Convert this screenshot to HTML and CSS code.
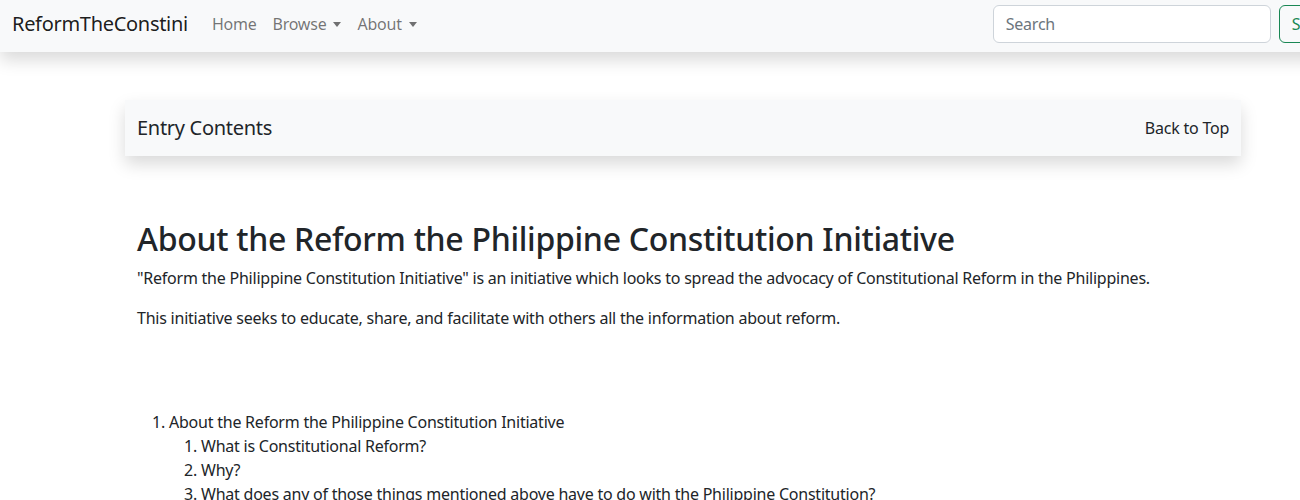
FILE: index.html
```html
<!DOCTYPE html>
<html lang="en">
<head>
<meta charset="utf-8">
<title>ReformTheConstini</title>
<link rel="stylesheet" href="styles.css">
</head>
<body>
<div class="page">
  <nav class="navbar">
    <div class="nav-left">
      <a class="brand" href="#">ReformTheConstini</a>
      <ul class="nav-links">
        <li><a class="nav-link" href="#">Home</a></li>
        <li><a class="nav-link dropdown" href="#">Browse</a></li>
        <li><a class="nav-link dropdown" href="#">About</a></li>
      </ul>
    </div>
    <form class="search-form">
      <input class="search-input" type="search" placeholder="Search">
      <button class="search-btn" type="button">Search</button>
    </form>
  </nav>

  <main class="container">
    <div class="entry-bar">
      <span class="entry-title">Entry Contents</span>
      <a class="back-top" href="#">Back to Top</a>
    </div>

    <section class="article">
      <h2 class="article-title">About the Reform the Philippine Constitution Initiative</h2>
      <p>"Reform the Philippine Constitution Initiative" is an initiative which looks to spread the advocacy of Constitutional Reform in the Philippines.</p>
      <p>This initiative seeks to educate, share, and facilitate with others all the information about reform.</p>
    </section>

    <ol class="toc">
      <li>About the Reform the Philippine Constitution Initiative
        <ol>
          <li>What is Constitutional Reform?</li>
          <li>Why?</li>
          <li>What does any of those things mentioned above have to do with the Philippine Constitution?</li>
        </ol>
      </li>
    </ol>
  </main>
</div>
</body>
</html>
```

FILE: styles.css
```css
html, body {
  margin: 0;
  padding: 0;
  overflow: hidden;
}
body {
  font-family: "Noto Sans", "Open Sans", sans-serif;
  font-size: 16px;
  line-height: 1.5;
  letter-spacing: -0.23px;
  color: #212529;
  background: #fff;
}
.page {
  width: 1366px;
}
a { text-decoration: none; }

.navbar {
  display: flex;
  align-items: center;
  justify-content: space-between;
  height: 52px;
  box-sizing: border-box;
  padding: 5px 12px 9px;
  background: #f8f9fa;
  box-shadow: 0 .5rem 1rem rgba(0,0,0,.15);
  position: relative;
  z-index: 2;
}
.nav-left {
  display: flex;
  align-items: center;
}
.brand {
  font-size: 20px;
  line-height: 30px;
  letter-spacing: -0.3px;
  color: rgba(0,0,0,.9);
  margin-right: 16px;
}
.nav-links {
  display: flex;
  list-style: none;
  margin: 0;
  padding: 0;
}
.nav-link {
  display: block;
  padding: 8px;
  color: rgba(0,0,0,.55);
}
.dropdown::after {
  content: "";
  display: inline-block;
  margin-left: 7px;
  vertical-align: 3px;
  border-top: 5px solid;
  border-right: 4.5px solid transparent;
  border-left: 4.5px solid transparent;
}
.search-form {
  display: flex;
  align-items: center;
}
.search-input {
  width: 278px;
  height: 38px;
  box-sizing: border-box;
  padding: 6px 12px;
  font: inherit;
  letter-spacing: inherit;
  color: #212529;
  background: #fff;
  border: 1px solid #ced4da;
  border-radius: 6px;
  margin-right: 8px;
}
.search-input::placeholder { color: #6c757d; }
.search-btn {
  height: 38px;
  padding: 6px 12px;
  font: inherit;
  letter-spacing: inherit;
  color: #198754;
  background: transparent;
  border: 1px solid #198754;
  border-radius: 6px;
}

.container {
  width: 1140px;
  box-sizing: border-box;
  padding: 0 12px;
  margin: 0 auto;
}
.entry-bar {
  margin-top: 48px;
  display: flex;
  align-items: center;
  justify-content: space-between;
  height: 56px;
  box-sizing: border-box;
  padding: 0 12px;
  background: #f8f9fa;
  box-shadow: 0 .5rem 1rem rgba(0,0,0,.15);
}
.entry-title {
  font-size: 20px;
  line-height: 24px;
  letter-spacing: -0.3px;
}
.back-top {
  color: #212529;
}

.article {
  padding: 0 12px;
  margin-top: 64px;
}
.article-title {
  font-size: 32px;
  font-weight: 500;
  line-height: 1.2;
  letter-spacing: -0.3px;
  margin: 0 0 8px;
}
.article p {
  margin: 0 0 16px;
}

.toc {
  margin: 80px 0 0;
  padding-left: 44px;
}
.toc ol {
  margin: 0;
  padding-left: 32px;
}
```
